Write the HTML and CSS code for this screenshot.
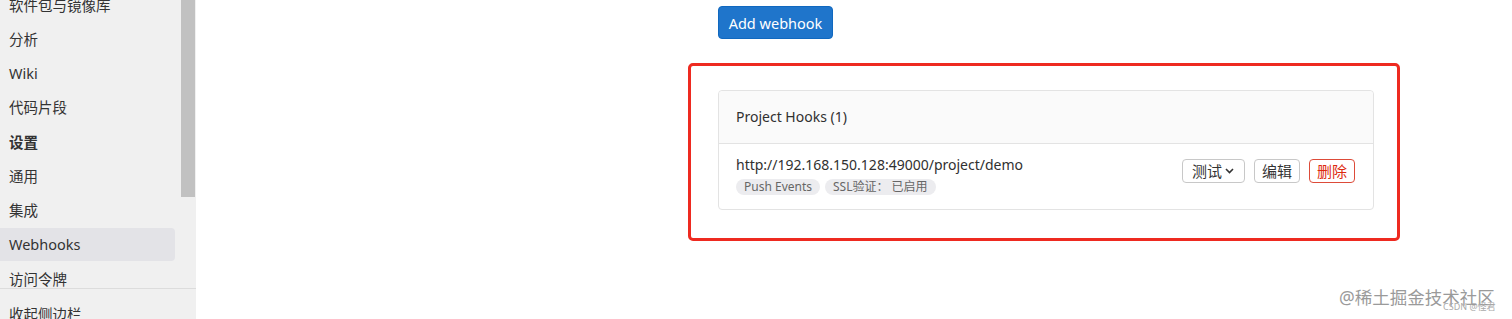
FILE: index.html
```html
<!DOCTYPE html>
<html lang="zh-CN">
<head>
<meta charset="utf-8">
<title>Webhooks</title>
<link rel="stylesheet" href="styles.css">
</head>
<body>
<div class="page">
  <aside class="sidebar">
    <nav class="nav">
      <div class="nav-item">软件包与镜像库</div>
      <div class="nav-item">分析</div>
      <div class="nav-item">Wiki</div>
      <div class="nav-item">代码片段</div>
      <div class="nav-item bold">设置</div>
      <div class="nav-item">通用</div>
      <div class="nav-item">集成</div>
      <div class="nav-item active">Webhooks</div>
      <div class="nav-item">访问令牌</div>
    </nav>
    <div class="collapse">收起侧边栏</div>
    <div class="scroll-thumb"></div>
  </aside>
  <main class="main">
    <div class="actions">
      <button class="btn-primary">Add webhook</button>
    </div>
    <div class="highlight">
      <section class="card">
        <header class="card-header">Project Hooks (1)</header>
        <div class="hook-row">
          <div class="hook-info">
            <div class="hook-url">http://192.168.150.128:49000/project/demo</div>
            <div class="badges">
              <span class="badge">Push Events</span>
              <span class="badge">SSL验证： 已启用</span>
            </div>
          </div>
          <div class="hook-actions">
            <button class="btn btn-test">测试<svg class="chev" width="9" height="6" viewBox="0 0 9 6"><path d="M1 1l3.5 3.5L8 1" fill="none" stroke="#333" stroke-width="1.6"/></svg></button>
            <button class="btn">编辑</button>
            <button class="btn danger">删除</button>
          </div>
        </div>
      </section>
    </div>
  </main>
</div>
<div class="watermark">@稀土掘金技术社区</div>
<div class="watermark-small">CSDN @怪君</div>
</body>
</html>
```
FILE: styles.css
```css
html, body {
  margin: 0;
  padding: 0;
  background: #fff;
  font-family: "Noto Sans", "Noto Sans CJK SC", sans-serif;
  color: #333;
  overflow: hidden;
}

.page {
  display: flex;
  height: 319px;
}

.sidebar {
  position: relative;
  width: 196px;
  flex: 0 0 196px;
  background: #f0f0f0;
  display: flex;
  flex-direction: column;
  overflow: hidden;
}

.nav {
  flex: 1;
  min-height: 0;
  overflow: hidden;
  padding-right: 21px;
}

.nav-item {
  height: 34.3px;
  line-height: 34.3px;
  padding-left: 9px;
  font-size: 14.5px;
  color: #333;
  white-space: nowrap;
  border-radius: 4px;
}

.nav-item:first-child {
  margin-top: -12.5px;
}

.nav-item.bold {
  font-weight: 700;
}

.nav-item.active {
  background: #e3e3e7;
  height: 33px;
  line-height: 33px;
  margin: 0.6px 0 0.7px;
  border-radius: 0 4px 4px 0;
}

.collapse {
  flex: 0 0 31px;
  height: 31px;
  min-height: 0;
  box-sizing: border-box;
  border-top: 1px solid #dcdcdc;
  padding: 14px 0 0 9px;
  font-size: 14.5px;
  line-height: 22px;
  background: #f0f0f0;
  white-space: nowrap;
}

.scroll-thumb {
  position: absolute;
  left: 181px;
  top: 0;
  width: 14px;
  height: 197px;
  background: #c1c1c1;
}

.main {
  flex: 1;
  padding: 6px 0 0 492px;
}

.actions {
  padding-left: 30px;
}

.btn-primary {
  height: 33px;
  width: 115px;
  padding: 0;
  border: 1px solid #1068bf;
  border-radius: 4px;
  background: #1f75cb;
  color: #fff;
  font-family: inherit;
  font-size: 14.5px;
}

.highlight {
  margin-top: 24px;
  width: 712px;
  height: 178px;
  box-sizing: border-box;
  border: 3px solid #ee2a20;
  border-radius: 5px;
  padding: 24px 23px 29px 27px;
}

.card {
  border: 1px solid #e3e3e3;
  border-radius: 4px;
  background: #fff;
}

.card-header {
  height: 52px;
  line-height: 52px;
  padding: 0 17px;
  background: #fafafa;
  border-bottom: 1px solid #e3e3e3;
  border-radius: 4px 4px 0 0;
  font-size: 14px;
  color: #303030;
}

.hook-row {
  height: 65px;
  box-sizing: border-box;
  display: flex;
  justify-content: space-between;
  align-items: flex-start;
  padding: 11px 18px 0 17px;
}

.hook-url {
  font-size: 14px;
  line-height: 20px;
  color: #303030;
}

.badges {
  display: flex;
  gap: 5px;
  margin-top: 4px;
}

.badge {
  height: 16px;
  line-height: 16px;
  padding: 0 8px;
  border-radius: 8px;
  background: #ececef;
  color: #666;
  font-size: 12px;
}

.hook-actions {
  display: flex;
  gap: 9px;
  margin-top: 4px;
}

.btn {
  height: 24px;
  box-sizing: border-box;
  padding: 0 7px;
  border: 1px solid #c8c8c8;
  border-radius: 4px;
  background: #fff;
  color: #333;
  font-family: inherit;
  font-size: 15px;
  line-height: 22px;
  display: flex;
  align-items: center;
  gap: 2px;
}

.btn-test {
  padding: 0 10px 0 9px;
}

.btn.danger {
  border-color: #dd4b39;
  color: #dd2b0e;
}

.chev {
  margin-left: 1px;
}

.watermark {
  position: absolute;
  left: 1339px;
  top: 284px;
  font-size: 17.5px;
  color: #9a9a9a;
  white-space: nowrap;
}

.watermark-small {
  position: absolute;
  left: 1443px;
  top: 300px;
  font-size: 9px;
  color: #aaa;
  white-space: nowrap;
}
```
